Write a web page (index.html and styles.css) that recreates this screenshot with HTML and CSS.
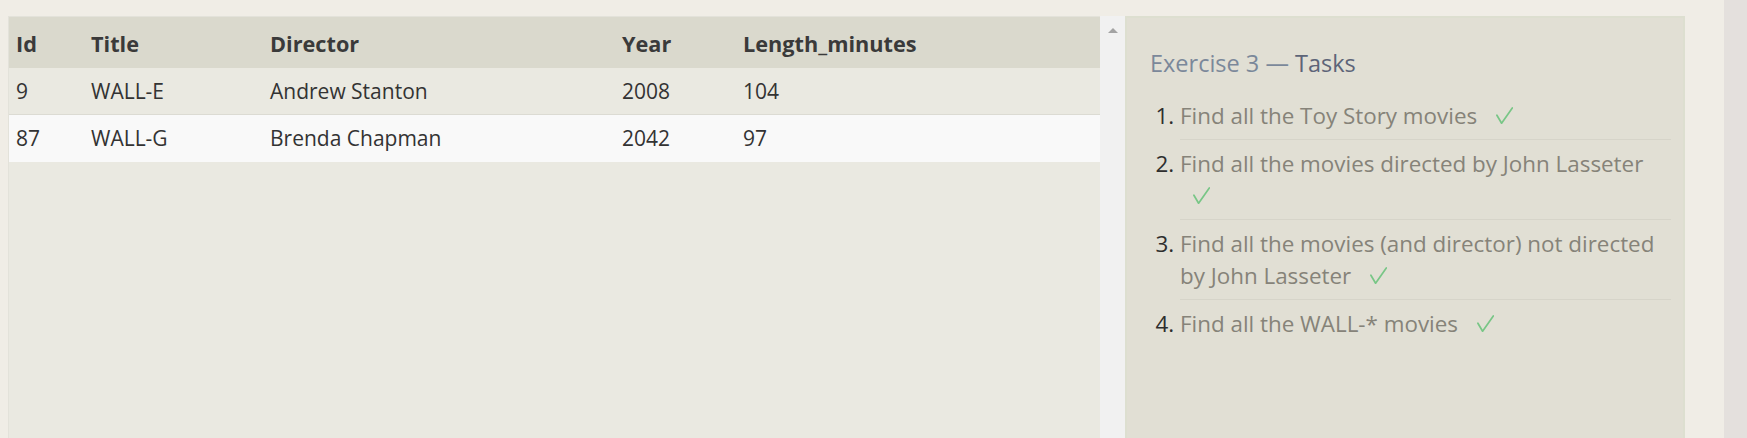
FILE: index.html
```html
<!DOCTYPE html>
<html lang="en">
<head>
<meta charset="utf-8">
<title>Exercise 3 — Tasks</title>
<link rel="stylesheet" href="styles.css">
</head>
<body>
<div class="page">
  <div class="content">
    <div class="workspace">
      <div class="results">
        <table class="grid">
          <thead>
            <tr><th>Id</th><th>Title</th><th>Director</th><th>Year</th><th>Length_minutes</th></tr>
          </thead>
          <tbody>
            <tr><td>9</td><td>WALL-E</td><td>Andrew Stanton</td><td>2008</td><td>104</td></tr>
            <tr class="alt"><td>87</td><td>WALL-G</td><td>Brenda Chapman</td><td>2042</td><td>97</td></tr>
          </tbody>
        </table>
      </div>
      <div class="scrollbar"><span class="arrow"></span></div>
      <aside class="tasks">
        <h2 class="tasks-title">Exercise 3 — <span class="tasks-title-strong">Tasks</span></h2>
        <ol class="task-list">
          <li><span class="task-text">Find all the Toy Story movies</span> <svg class="check" viewBox="0 0 17 17" width="17" height="17"><path d="M0.9 8.2 L5.6 16.3 L16.3 0.9"/></svg></li>
          <li><span class="task-text">Find all the movies directed by John Lasseter</span> <svg class="check" viewBox="0 0 17 17" width="17" height="17"><path d="M0.9 8.2 L5.6 16.3 L16.3 0.9"/></svg></li>
          <li><span class="task-text">Find all the movies (and director) not directed <span class="keep">by John Lasseter</span></span> <svg class="check" viewBox="0 0 17 17" width="17" height="17"><path d="M0.9 8.2 L5.6 16.3 L16.3 0.9"/></svg></li>
          <li><span class="task-text">Find all the WALL-* movies</span> <svg class="check" viewBox="0 0 17 17" width="17" height="17"><path d="M0.9 8.2 L5.6 16.3 L16.3 0.9"/></svg></li>
        </ol>
      </aside>
    </div>
  </div>
  <div class="page-scroll"></div>
</div>
</body>
</html>
```

FILE: styles.css
```css
html, body {
  margin: 0;
  height: 100%;
}

body {
  background: #f0ede6;
  font-family: "Open Sans", "Noto Sans", sans-serif;
  overflow: hidden;
}

.page {
  display: flex;
  height: 100%;
}

.content {
  flex: 1;
  min-width: 0;
  display: flex;
  padding: 16px 0 0 8px;
}

.workspace {
  display: flex;
  width: 1677px;
}

.results {
  width: 1092px;
  box-sizing: border-box;
  background: #eae9e1;
  border-left: 1px solid #e3e2da;
  border-top: 1px solid #e3e2da;
}

.grid {
  width: 100%;
  border-collapse: collapse;
  table-layout: fixed;
  font-size: 21px;
  color: #333333;
}

.grid th,
.grid td {
  text-align: left;
  padding: 9px 7px;
  line-height: 28px;
  font-weight: 400;
  white-space: nowrap;
}

.grid th {
  font-size: 21.7px;
  font-weight: 700;
  color: #3a3a3a;
  background: #dad9cd;
  padding: 13px 7px 10px;
}

.grid th:nth-child(1) { width: 61px; }
.grid th:nth-child(2) { width: 165px; }
.grid th:nth-child(3) { width: 338px; }
.grid th:nth-child(4) { width: 107px; }

.grid tbody tr {
  border-bottom: 1px solid #dcdbd3;
}

.grid tbody tr.alt {
  background: #f9f9f9;
  border-bottom: none;
}

.grid tbody tr.alt td {
  padding-bottom: 10px;
}

.scrollbar {
  width: 25px;
  background: #f1f1f1;
  display: flex;
  justify-content: center;
  align-items: flex-start;
  padding-top: 12px;
  box-sizing: border-box;
}

.arrow {
  width: 0;
  height: 0;
  border-left: 5.5px solid transparent;
  border-right: 5.5px solid transparent;
  border-bottom: 5px solid #a3a3a3;
}

.tasks {
  width: 560px;
  box-sizing: border-box;
  background: #e1dfd4;
  border: 2px solid #dddfd0;
  border-bottom: none;
  padding: 29px 12px 0 23px;
}

.tasks-title {
  margin: 0;
  font-size: 23.5px;
  font-weight: 400;
  line-height: 32px;
  color: #7b889a;
}

.tasks-title-strong {
  color: #5d6478;
}

.task-list {
  margin: 13px 0 0;
  padding-left: 30px;
  font-size: 22.4px;
  line-height: 32px;
  color: #2e2e2e;
}

.task-list li {
  padding: 7.5px 0;
  border-bottom: 1px solid #d6d4c9;
}

.task-list li:last-child {
  border-bottom: none;
}

.task-text {
  color: #868379;
}

.keep {
  white-space: nowrap;
}

.check {
  margin-left: 13px;
  fill: none;
  stroke: #78c686;
  stroke-width: 1.7;
  stroke-linecap: round;
  stroke-linejoin: round;
}

.page-scroll {
  width: 23px;
  background: #e4e0dd;
}
```
